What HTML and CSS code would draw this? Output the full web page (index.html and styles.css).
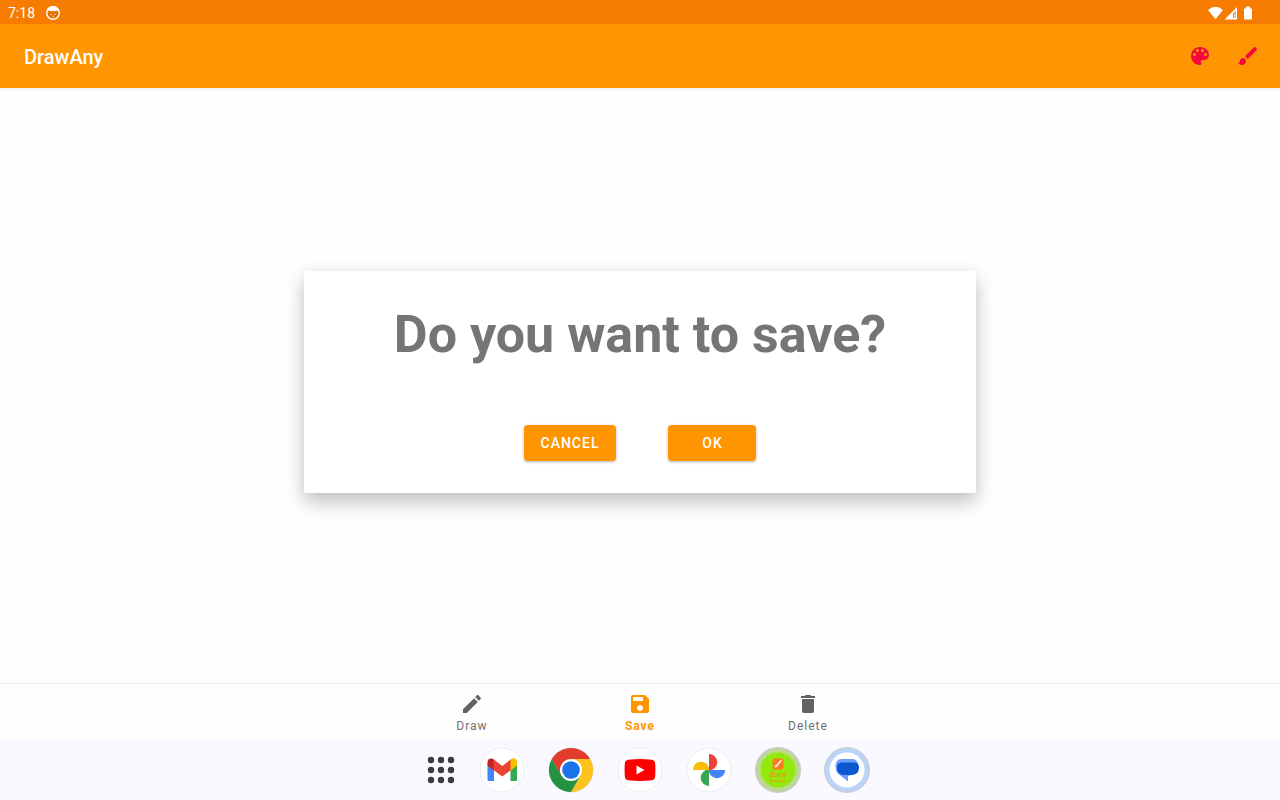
FILE: index.html
```html
<!DOCTYPE html>
<html lang="en">
<head>
<meta charset="utf-8">
<meta name="viewport" content="width=device-width, initial-scale=1">
<title>DrawAny</title>
<link rel="stylesheet" href="styles.css">
</head>
<body>
<div class="screen">
  <header>
    <div class="status">
      <span>7:18</span>
      <svg class="status-face" viewBox="0 0 16 16" width="16" height="16" aria-hidden="true">
        <circle cx="8" cy="8" r="6.300" fill="none" stroke="#fff" stroke-width="1.400"/>
        <path d="M2 6.500C2 3.500 4.500 1.300 8 1.300S14 3.500 14 6.500L12 5.500 10.500 6H5.500L4 5.500Z" fill="#fff"/>
        <path d="M3.500 6.500 5.500 7.600H10.500L12.500 6.500V10L10.500 12H5.500L3.500 10Z" fill="#d96c00"/>
        <path d="M5 9.500H7M9 9.500H11M7 11.200H9" stroke="#ffd9b0" stroke-width=".8"/>
      </svg>
      <svg class="status-system" viewBox="0 0 46 16" width="46" height="16" fill="#fff" aria-hidden="true">
        <path d="M0 5Q7.500-1.400 15 5L7.500 14.200Z"/>
        <path fill-rule="evenodd" d="M16.500 14.500 29 2V14.500ZM25 13H27.500V6L25 8.500Z"/>
        <path d="M26 8.500H27V13H26Z" fill="#ffd9b0"/>
        <path d="M36 3.500H38V1.500H42V3.500H44V13.500Q44 14.500 43 14.500H37Q36 14.500 36 13.500Z"/>
      </svg>
    </div>
    <div class="appbar">
      <h1>DrawAny</h1>
      <div class="tools">
        <button class="tool" aria-label="Colour palette">
          <svg viewBox="0 0 24 24" width="24" height="24"><path d="M12 3c-4.970 0-9 4.030-9 9s4.030 9 9 9c.83 0 1.500-.67 1.500-1.500 0-.39-.15-.74-.39-1.010-.23-.26-.38-.61-.38-.99 0-.83.67-1.500 1.500-1.500H16c2.760 0 5-2.240 5-5 0-4.420-4.030-8-9-8zm-5.500 9c-.83 0-1.500-.67-1.500-1.500S5.670 9 6.500 9 8 9.670 8 10.500 7.330 12 6.500 12zm3-4C8.670 8 8 7.330 8 6.500S8.670 5 9.500 5s1.500.67 1.500 1.500S10.330 8 9.500 8zm5 0c-.83 0-1.500-.67-1.500-1.500S13.670 5 14.500 5s1.500.67 1.500 1.500S15.330 8 14.500 8zm3 4c-.83 0-1.500-.67-1.500-1.500S16.670 9 17.500 9s1.500.67 1.500 1.500-.67 1.500-1.500 1.500z"/></svg>
        </button>
        <button class="tool" aria-label="Brush">
          <svg viewBox="0 0 24 24" width="24" height="24"><path d="M7 14c-1.660 0-3 1.340-3 3 0 1.310-1.160 2-2 2 .92 1.220 2.490 2 4 2 2.210 0 4-1.790 4-4 0-1.660-1.340-3-3-3zm13.710-9.370l-1.340-1.340c-.39-.39-1.020-.39-1.410 0L9 12.250 11.750 15l8.960-8.960c.39-.39.39-1.020 0-1.410z"/></svg>
        </button>
      </div>
    </div>
  </header>
  <main></main>
  <nav class="tabs" aria-label="Drawing">
    <a class="tab" href="#draw">
      <svg viewBox="0 0 24 24" width="24" height="24"><path d="M3 17.250V21h3.750L17.810 9.940l-3.750-3.750L3 17.250zM20.710 7.040c.39-.39.39-1.020 0-1.410l-2.340-2.340c-.39-.39-1.020-.39-1.410 0l-1.830 1.830 3.750 3.750 1.830-1.830z"/></svg>
      <span>Draw</span>
    </a>
    <a class="tab tab-active" href="#save" aria-current="page">
      <svg viewBox="0 0 24 24" width="24" height="24"><path d="M17 3H5c-1.110 0-2 .9-2 2v14c0 1.100.89 2 2 2h14c1.100 0 2-.9 2-2V7l-4-4zm-5 16c-1.660 0-3-1.340-3-3s1.340-3 3-3 3 1.340 3 3-1.340 3-3 3zm3-10H5V5h10v4z"/></svg>
      <span>Save</span>
    </a>
    <a class="tab" href="#delete">
      <svg viewBox="0 0 24 24" width="24" height="24"><path d="M6 19c0 1.100.9 2 2 2h8c1.100 0 2-.9 2-2V7H6v12zM19 4h-3.500l-1-1h-5l-1 1H5v2h14V4z"/></svg>
      <span>Delete</span>
    </a>
  </nav>
  <footer class="dock">
    <button class="launcher" aria-label="All apps">
      <svg viewBox="0 0 28 28" width="28" height="28" fill="#3b3b43"><circle cx="4" cy="4" r="3.200"/><circle cx="14" cy="4" r="3.200"/><circle cx="24" cy="4" r="3.200"/><circle cx="4" cy="14" r="3.200"/><circle cx="14" cy="14" r="3.200"/><circle cx="24" cy="14" r="3.200"/><circle cx="4" cy="24" r="3.200"/><circle cx="14" cy="24" r="3.200"/><circle cx="24" cy="24" r="3.200"/></svg>
    </button>
    <div class="apps">
      <button class="app" aria-label="Gmail">
        <svg viewBox="0 0 46 46" width="46" height="46">
          <circle cx="23" cy="23" r="22" fill="#fff" stroke="#ececf2"/>
          <path fill="#4285f4" d="M8.500 17 15 20V34H10Q8.500 34 8.500 32.500Z"/>
          <path fill="#34a853" d="M31.500 20 38 17V32.500Q38 34 36.500 34H31.500Z"/>
          <path fill="#c5221f" d="M8.500 18.500V15.500C8.500 11.500 12 10.500 15 12.700V23.500Z"/>
          <path fill="#fbbc04" d="M38 18.500V15.500C38 11.500 34.500 10.500 31.500 12.700V23.500Z"/>
          <path fill="#ea4335" d="M14.500 12.300 23.250 19 32 12.300V23L23.250 29.500 14.500 23Z"/>
          <path fill="#fbbc04" d="M38 18.500V15.500C38 11.500 34.500 10.500 31.500 12.700V23.500Z"/>
        </svg>
      </button>
      <button class="app" aria-label="Chrome">
        <svg viewBox="0 0 46 46" width="46" height="46">
          <circle cx="23" cy="23" r="22.500" fill="#d9d9df"/>
          <path fill="#e33b2e" d="M23 23 3.950 12A22 22 0 0 1 42.050 12Z"/>
          <path fill="#fcc31e" d="M23 12H42.050A22 22 0 0 1 23 45L32.530 28.500Z"/>
          <path fill="#229342" d="M32.530 28.500 23 45A22 22 0 0 1 3.950 12L13.470 28.500 23 30Z"/>
          <path fill="#e33b2e" d="M3.950 12 13.470 28.500 23 12Z"/>
          <circle cx="23" cy="23" r="11" fill="#fff"/>
          <circle cx="23" cy="23" r="8.800" fill="#1a73e8"/>
        </svg>
      </button>
      <button class="app" aria-label="YouTube">
        <svg viewBox="0 0 46 46" width="46" height="46">
          <circle cx="23" cy="23" r="22" fill="#fff" stroke="#ececf2"/>
          <path fill="#f00" d="M11 12.800Q23 11.400 35 12.800Q38 13.200 38.200 17Q38.600 23 38.200 29Q38 32.800 35 33.200Q23 34.600 11 33.200Q8 32.800 7.800 29Q7.400 23 7.800 17Q8 13.200 11 12.800Z"/>
          <path fill="#fff" d="M19.500 18.500 27.500 23 19.500 27.500Z"/>
        </svg>
      </button>
      <button class="app" aria-label="Photos">
        <svg viewBox="0 0 46 46" width="46" height="46">
          <circle cx="23" cy="23" r="22" fill="#fff" stroke="#ececf2"/>
          <path fill="#ea4335" d="M23 7A8.300 8.200 0 0 1 23 23.400Z"/>
          <path fill="#4285f4" d="M22.800 23H39.200A8.200 8.300 0 0 1 22.800 23Z"/>
          <path fill="#34a853" d="M23 39A8.300 8.200 0 0 1 23 22.600Z"/>
          <path fill="#fbbc04" d="M23.200 23H6.800A8.200 8.300 0 0 1 23.200 23Z"/>
        </svg>
      </button>
      <button class="app" aria-label="DrawAny">
        <svg viewBox="0 0 46 46" width="46" height="46">
          <circle cx="23" cy="23" r="22" fill="#badb8c" stroke="#c5cdbb" stroke-width="2"/>
          <circle cx="23" cy="23" r="17.500" fill="#93e90b"/>
          <rect x="17.500" y="11.500" width="11" height="11" rx="2.500" fill="#ff7a1a"/>
          <path d="M26 13.800 23.200 17" stroke="#fff" stroke-width="1.500" stroke-linecap="round"/>
          <path d="M21.800 17 23.500 18.600Q22 20.800 19.500 20.300Q20.500 17.500 21.800 17Z" fill="#fff"/>
          <text class="mark-main" x="23" y="30" text-anchor="middle">draw</text>
          <text class="mark-sub" x="23" y="35" text-anchor="middle">DrawAny</text>
        </svg>
      </button>
      <button class="app" aria-label="Messages">
        <svg viewBox="0 0 46 46" width="46" height="46">
          <circle cx="23" cy="23" r="22" fill="#b9d5fb" stroke="#c5cfdf" stroke-width="2"/>
          <circle cx="23" cy="23" r="17.500" fill="#fff"/>
          <path fill="#6b9dfa" d="M17.500 12H28Q33 12 34 17L33 26 24 29V34.500L14.500 27Q11.500 24 11.500 19Q12 12 17.500 12Z"/>
          <path fill="#0b57d0" d="M18 15.500H30Q35 15.500 35 20.500Q35 28 27 28H20Q13 28 13 20.500Q13 15.500 18 15.500Z"/>
        </svg>
      </button>
    </div>
  </footer>
  <div class="overlay">
    <section class="dialog" role="dialog" aria-labelledby="dialog-title">
      <h2 id="dialog-title">Do you want to save?</h2>
      <div class="actions">
        <button class="action">CANCEL</button>
        <button class="action">OK</button>
      </div>
    </section>
  </div>
</div>
</body>
</html>
```

FILE: styles.css
```css
* { box-sizing: border-box; }
body { margin: 0; font-family: Roboto, "Liberation Sans", sans-serif; background: #fefefe; }
h1, h2 { margin: 0; }
button { border: 0; padding: 0; background: none; font-family: inherit; cursor: pointer; }
svg { display: block; }

.screen { position: relative; min-height: 100vh; display: flex; flex-direction: column; }
.status { display: flex; align-items: center; height: 24px; padding: 1px 26px 0 8px; background: #f57c00; color: #fff; font-size: 14px; }
.status-face { margin-left: 10px; }
.status-system { margin-left: auto; }
.appbar { display: flex; align-items: center; justify-content: space-between; height: 64px; padding: 0 8px 0 24px; background: #ff9501; box-shadow: 0 2px 2px #edf0f6; }
.appbar h1 { padding-top: 2px; color: #fff; font-size: 20px; font-weight: 500; }
.tools { display: flex; }
.tool { display: grid; place-items: center; width: 48px; height: 48px; }
.tool svg { fill: #f5093c; }
main { flex: 1; }

.tabs { display: flex; justify-content: center; height: 57px; border-top: 1px solid #f0f0f0; }
.tab { display: flex; flex-direction: column; align-items: center; width: 168px; padding-top: 8px; color: #707070; font-size: 12px; line-height: 20px; letter-spacing: 1px; text-decoration: none; }
.tab svg { fill: #636363; }
.tab-active { color: #ff9501; font-weight: 700; }
.tab-active svg { fill: #ff9501; }

.dock { display: flex; align-items: center; justify-content: center; gap: 13px; height: 60px; padding-left: 28px; background: #f9f9ff; }
.apps { display: flex; }
.app { display: grid; place-items: center; width: 69px; }
.mark-main { font: 9px "Liberation Serif", serif; fill: #ef8a18; }
.mark-sub { font: 4px Roboto, sans-serif; fill: #ef8a18; }

.overlay { position: absolute; inset: 24px 0 60px; display: grid; place-items: center; }
.dialog { display: flex; flex-direction: column; align-items: center; gap: 60px; width: 672px; max-width: 95%; padding: 33px 24px 32px; border-radius: 2px; background: #fff; box-shadow: 0 10px 20px rgba(0, 0, 0, .2), 0 2px 16px rgba(0, 0, 0, .08); }
.dialog h2 { color: #757575; font-size: 52px; line-height: 61px; font-weight: 700; text-align: center; }
.actions { display: flex; gap: 52px; }
.action { min-width: 88px; height: 36px; padding: 0 17px; border-radius: 4px; background: #ff9501; color: #fff; font-size: 14px; font-weight: 500; letter-spacing: 1px; box-shadow: 0 1px 3px rgba(0, 0, 0, .3); }
```
